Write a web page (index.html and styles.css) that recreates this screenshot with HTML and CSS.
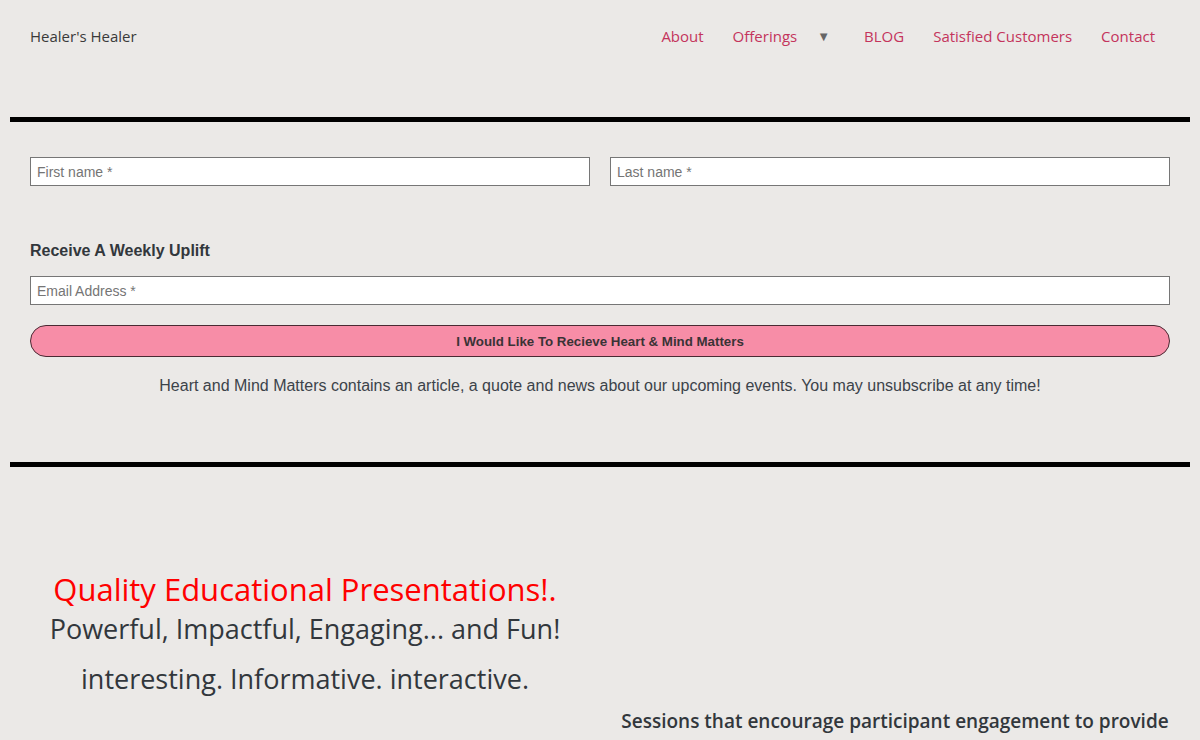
FILE: index.html
```html
<!DOCTYPE html>
<html lang="en">
<head>
<meta charset="utf-8">
<title>Healer's Healer</title>
<link rel="stylesheet" href="styles.css">
</head>
<body>
<div class="page">
  <header class="site-header">
    <div class="logo">Healer's Healer</div>
    <nav class="nav">
      <a class="nav-link" href="#">About</a>
      <a class="nav-link has-sub" href="#">Offerings<span class="arrow">▼</span></a>
      <a class="nav-link" href="#">BLOG</a>
      <a class="nav-link" href="#">Satisfied Customers</a>
      <a class="nav-link" href="#">Contact</a>
    </nav>
  </header>
  <hr class="rule">
  <form class="signup">
    <div class="name-row">
      <input class="field" type="text" placeholder="First name *">
      <input class="field" type="text" placeholder="Last name *">
    </div>
    <h3 class="signup-title">Receive A Weekly Uplift</h3>
    <input class="field field-full" type="email" placeholder="Email Address *">
    <button class="submit" type="button">I Would Like To Recieve Heart &amp; Mind Matters</button>
    <p class="signup-note">Heart and Mind Matters contains an article, a quote and news about our upcoming events. You may unsubscribe at any time!</p>
  </form>
  <hr class="rule rule-2">
  <section class="promo">
    <div class="promo-left">
      <h2 class="promo-title">Quality Educational Presentations!.</h2>
      <p class="promo-sub">Powerful, Impactful, Engaging... and Fun!</p>
      <p class="promo-sub promo-sub-2">interesting. Informative. interactive.</p>
    </div>
    <div class="promo-right">
      <p class="promo-text">Sessions that encourage participant engagement to provide rich and valuable learning for everyone.</p>
    </div>
  </section>
</div>
</body>
</html>
```
FILE: styles.css
```css
html, body {
  margin: 0;
  padding: 0;
  background: #ebe9e7;
}
body {
  font-family: "Open Sans", "Noto Sans", sans-serif;
  color: #333;
}
.page {
  padding: 0 10px;
}
.site-header {
  display: flex;
  align-items: center;
  justify-content: space-between;
  height: 72px;
  padding: 0 20px 0 20px;
}
.logo {
  font-size: 15px;
  color: #3a3a3a;
}
.nav {
  display: flex;
  align-items: center;
}
.nav-link {
  font-size: 15px;
  color: #c4345c;
  text-decoration: none;
  padding: 0 14.5px;
}
.nav-link:last-child {
  padding-right: 15px;
}
.arrow {
  color: #666;
  font-size: 13px;
  margin-left: 20px;
  margin-right: 5px;
  position: relative;
  top: -1px;
}
.rule {
  border: 0;
  height: 5px;
  background: #000;
  margin: 45px 0 0 0;
}
.signup {
  padding: 35px 20px 0;
}
.name-row {
  display: flex;
  gap: 20px;
}
.field {
  box-sizing: border-box;
  height: 29px;
  border: 1px solid #767676;
  background: #fff;
  font-family: "Liberation Sans", Arial, sans-serif;
  font-size: 14px;
  padding: 0 6px;
  flex: 1;
  margin: 0;
  border-radius: 0;
}
.field::placeholder {
  color: #757575;
}
.field-full {
  display: block;
  width: 100%;
}
.signup-title {
  font-family: "Liberation Sans", Arial, sans-serif;
  font-size: 16px;
  font-weight: bold;
  color: #32373c;
  margin: 56px 0 16px;
  line-height: 18px;
}
.submit {
  display: block;
  width: 100%;
  height: 32px;
  margin-top: 20px;
  background: #f78da7;
  border: 1px solid #4a2a33;
  border-radius: 16px;
  font-family: "Liberation Sans", Arial, sans-serif;
  font-size: 13.3px;
  font-weight: bold;
  color: #3a3336;
  cursor: pointer;
}
.signup-note {
  font-family: "Liberation Sans", Arial, sans-serif;
  font-size: 16px;
  color: #3c434a;
  text-align: center;
  margin: 19px 0 0;
  line-height: 20px;
}
.rule-2 {
  margin-top: 66px;
}
.promo {
  display: grid;
  grid-template-columns: 1fr 1fr;
  padding-top: 102px;
}
.promo-left {
  text-align: center;
}
.promo-title {
  color: #ff0000;
  font-size: 31px;
  font-weight: 500;
  margin: 0;
  line-height: 40px;
}
.promo-sub {
  font-size: 27px;
  font-weight: 500;
  color: #32373c;
  margin: 0;
  line-height: 40px;
}
.promo-sub-2 {
  margin-top: 10px;
}
.promo-right {
  text-align: center;
  padding: 138px 20px 0;
}
.promo-text {
  font-size: 19px;
  font-weight: 600;
  color: #32373c;
  margin: 0;
  line-height: 28px;
}
```
